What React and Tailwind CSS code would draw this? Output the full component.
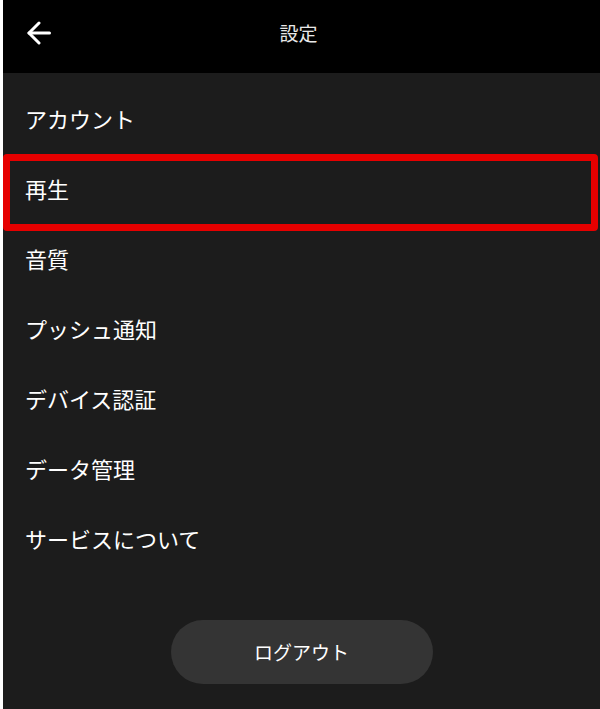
const items = [
  'アカウント',
  '再生',
  '音質',
  'プッシュ通知',
  'デバイス認証',
  'データ管理',
  'サービスについて',
];

// settings screen
const App = () => {
  return (
    <div
      className="flex w-full h-[709px] bg-white"
      style={{ fontFamily: '"Noto Sans CJK JP", "Noto Sans", sans-serif' }}
    >
      <div className="w-[3px] shrink-0 bg-white" />
      <div className="flex-1 flex flex-col bg-[#1c1c1c]">
        {/* Header */}
        <div className="relative h-[73px] shrink-0 bg-black flex items-center justify-center">
          <button className="absolute left-[24px] top-[21px]">
            <svg width="24" height="24" viewBox="0 0 24 24" fill="none" stroke="white" strokeWidth="3" strokeLinecap="round" strokeLinejoin="round">
              <path d="M22.5 12H2" />
              <path d="M12 2L2 12l10 10" />
            </svg>
          </button>
          <h1 className="text-[19px] text-[#e8e8e8] pr-[6px] mb-[6px]">設定</h1>
        </div>

        {/* Items */}
        <ul className="pt-[10px]">
          {items.map((label, idx) => (
            <li key={label} className="relative h-[70px] flex items-center pl-[22px] text-[22px] text-white">
              {idx === 1 && (
                <div className="absolute left-0 right-[2px] top-[1px] h-[77px] border-[7px] border-[#e60000] rounded-[4px]" />
              )}
              <span className="relative">{label}</span>
            </li>
          ))}
        </ul>

        <div className="flex justify-center mt-[47px]">
          <button className="w-[262px] h-[64px] rounded-full bg-[#343434] text-white text-[19px]">
            ログアウト
          </button>
        </div>
      </div>
    </div>
  );
};

export default App;
